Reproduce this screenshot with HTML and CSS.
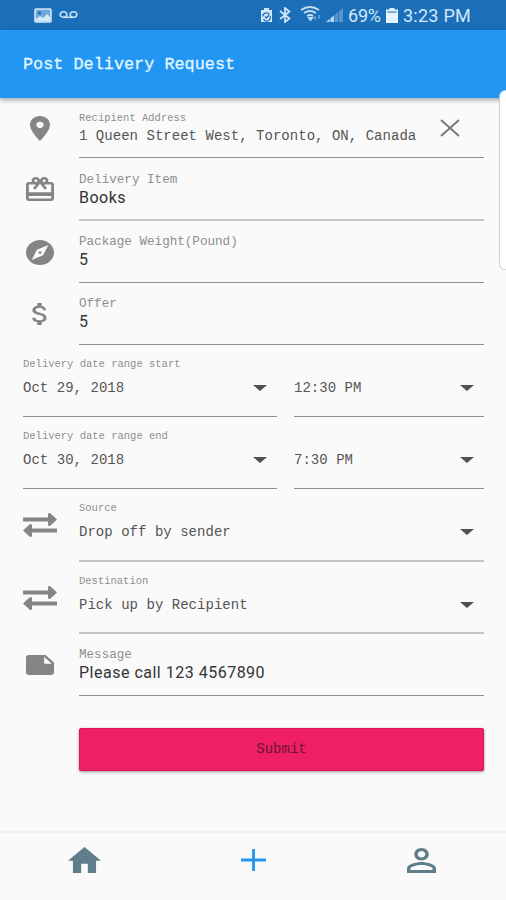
FILE: index.html
```html
<!DOCTYPE html>
<html lang="en">
<head>
  <meta charset="utf-8">
  <title>Post Delivery Request</title>
  <link rel="stylesheet" href="styles.css">
</head>
<body>
  <div class="status-bar">
    <div class="status-left">
      <svg width="18" height="15" viewBox="0 0 18 15"><rect x="1" y="1" width="16" height="13" rx="1" fill="#6fa9d8" stroke="#d3e8f8" stroke-width="1.6"/><circle cx="5.5" cy="5" r="1.7" fill="#1b6fb9"/><path d="M2 13V11L6 8L9 10L13 6L16 9V13Z" fill="#d3e8f8"/></svg>
      <svg class="voicemail" width="19" height="9" viewBox="0 0 19 9" fill="none" stroke="#c3ddf2" stroke-width="1.6"><ellipse cx="4.5" cy="4.5" rx="3.3" ry="2.8"/><ellipse cx="14.5" cy="4.5" rx="3.3" ry="2.8"/><path d="M4.5 7.3H14.5"/></svg>
    </div>
    <div class="status-right">
      <svg class="alarm" width="13" height="15" viewBox="0 0 13 15"><path d="M4 0H9V2H12V14H1V2H4Z" fill="#d3e8f8"/><path d="M3 8.500A3.500 3 0 0 1 9.500 6.500M10 8A3.500 3.500 0 0 1 3.500 11M5 8.500L6.500 10L9 7" fill="none" stroke="#1b6fb9" stroke-width="1.3"/></svg>
      <svg class="bluetooth" width="12" height="16" viewBox="0 0 12 16" fill="none" stroke="#d3e8f8" stroke-width="1.7"><path d="M1 4L10.500 11.500L6 15V1L10.500 4.500L1 12"/></svg>
      <svg class="wifi" width="22" height="16" viewBox="0 0 22 16" fill="none" stroke="#c3ddf2" stroke-width="1.9"><path d="M1 4Q10 -2 19 4M4 7Q10 3 16 7M7 10Q10 8 13 10"/><path d="M9 12H12L10.500 14Z" fill="#c3ddf2"/><path d="M15 10V14M19 9V13" stroke="#5c9bd0" stroke-width="2"/></svg>
      <svg class="signal" width="17" height="14" viewBox="0 0 17 14"><path d="M0 14L17 0V14Z" fill="#5796cd"/><path d="M0 14L8 7.400V14Z" fill="#b5d6f0"/><path d="M4 9V14M8.500 5V14M12.500 2V14" stroke="#1b6fb9" stroke-width=".7"/></svg>
      <span class="percent">69%</span>
      <svg class="battery" width="12" height="15" viewBox="0 0 12 15"><path d="M3.500 0H8.500V1.500H12V15H0V1.500H3.500Z" fill="#e3f2fd"/><path d="M1.500 4H10.500" stroke="#5b97cb" stroke-width="1.500"/></svg>
      <span class="clock">3:23 PM</span>
    </div>
  </div>

  <header class="app-bar">Post Delivery Request</header>

  <form class="form">
    <div class="row row-address">
      <div class="icon"><svg width="20" height="25" viewBox="5 2 14 20" preserveAspectRatio="none"><path d="M12 2C8.130 2 5 5.130 5 9c0 5.250 7 13 7 13s7-7.750 7-13c0-3.870-3.130-7-7-7zm0 9.500a2.500 2.500 0 1 1 0-5 2.500 2.500 0 0 1 0 5z"/></svg></div>
      <div class="field">
        <div class="label label-small">Recipient Address</div>
        <div class="value">1 Queen Street West, Toronto, ON, Canada</div>
        <svg class="clear" width="20" height="18" viewBox="0 0 20 18"><path d="M1 1L19 17M19 1L1 17"/></svg>
      </div>
    </div>

    <div class="row row-item">
      <div class="icon"><svg width="28" height="24" viewBox="2 2 20 19" preserveAspectRatio="none"><path d="M20 6h-2.180c.11-.31.180-.65.180-1 0-1.660-1.340-3-3-3-1.050 0-1.960.54-2.500 1.350l-.5.670-.5-.68C10.960 2.540 10.050 2 9 2 7.340 2 6 3.340 6 5c0 .35.070.69.180 1H4c-1.110 0-1.990.89-1.990 2L2 19c0 1.110.89 2 2 2h16c1.110 0 2-.89 2-2V8c0-1.110-.89-2-2-2zm-5-2c.55 0 1 .45 1 1s-.45 1-1 1-1-.45-1-1 .45-1 1-1zM9 4c.55 0 1 .45 1 1s-.45 1-1 1-1-.45-1-1 .45-1 1-1zm11 15H4v-2h16v2zm0-5H4V8h5.080L7 10.830 8.620 12 11 8.760l1-1.360 1 1.360L15.380 12 17 10.830 14.920 8H20v6z"/></svg></div>
      <div class="field thick">
        <div class="label">Delivery Item</div>
        <div class="value sans">Books</div>
      </div>
    </div>

    <div class="row">
      <div class="icon"><svg width="28" height="25" viewBox="2 2 20 20" preserveAspectRatio="none"><path d="M12 10.900c-.61 0-1.100.49-1.100 1.100s.49 1.100 1.100 1.100c.61 0 1.100-.49 1.100-1.100s-.49-1.100-1.100-1.100zM12 2C6.480 2 2 6.480 2 12s4.480 10 10 10 10-4.480 10-10S17.520 2 12 2zm2.190 12.190L6 18l3.810-8.190L18 6l-3.810 8.190z"/></svg></div>
      <div class="field">
        <div class="label">Package Weight(Pound)</div>
        <div class="value sans">5</div>
      </div>
    </div>

    <div class="row">
      <div class="icon icon-dollar"><svg width="15" height="22" viewBox="6.250 3 10.500 18" preserveAspectRatio="none"><path d="M11.800 10.900c-2.270-.59-3-1.200-3-2.150 0-1.090 1.010-1.850 2.700-1.850 1.780 0 2.440.85 2.500 2.100h2.210c-.07-1.720-1.120-3.300-3.210-3.810V3h-3v2.160c-1.940.42-3.500 1.680-3.500 3.610 0 2.310 1.910 3.460 4.700 4.130 2.500.6 3 1.480 3 2.410 0 .69-.49 1.790-2.700 1.790-2.060 0-2.870-.92-2.980-2.100h-2.200c.12 2.190 1.760 3.420 3.680 3.830V21h3v-2.150c1.950-.37 3.500-1.500 3.500-3.550 0-2.840-2.430-3.810-4.700-4.400z"/></svg></div>
      <div class="field">
        <div class="label">Offer</div>
        <div class="value sans">5</div>
      </div>
    </div>

    <div class="row row-select">
      <div class="field field-date">
        <div class="label label-small">Delivery date range start</div>
        <div class="value select">Oct 29, 2018<i class="caret"></i></div>
      </div>
      <div class="field">
        <div class="label label-small"></div>
        <div class="value select">12:30 PM<i class="caret"></i></div>
      </div>
    </div>

    <div class="row row-select">
      <div class="field field-date">
        <div class="label label-small">Delivery date range end</div>
        <div class="value select">Oct 30, 2018<i class="caret"></i></div>
      </div>
      <div class="field">
        <div class="label label-small"></div>
        <div class="value select">7:30 PM<i class="caret"></i></div>
      </div>
    </div>

    <div class="row row-select row-source">
      <div class="icon"><svg width="34" height="24" viewBox="0 0 34 24"><path d="M0 4.500H25V0.500L27 0L34 6.500L27 13L25 12.500V8.500H0ZM34 15.500H9V11.500L7 11L0 17.500L7 24L9 23.500V19.500H34Z"/></svg></div>
      <div class="field thick">
        <div class="label label-small">Source</div>
        <div class="value select">Drop off by sender<i class="caret"></i></div>
      </div>
    </div>

    <div class="row row-select">
      <div class="icon"><svg width="34" height="24" viewBox="0 0 34 24"><path d="M0 4.500H25V0.500L27 0L34 6.500L27 13L25 12.500V8.500H0ZM34 15.500H9V11.500L7 11L0 17.500L7 24L9 23.500V19.500H34Z"/></svg></div>
      <div class="field thick">
        <div class="label label-small">Destination</div>
        <div class="value select">Pick up by Recipient<i class="caret"></i></div>
      </div>
    </div>

    <div class="row row-message">
      <div class="icon"><svg width="28" height="20" viewBox="2 4 20 16" preserveAspectRatio="none"><path d="M22 10l-6-6H4c-1.100 0-2 .9-2 2v12.010c0 1.100.9 1.990 2 1.990l16-.01c1.100 0 2-.89 2-1.990v-8zm-7-4.500l5.500 5.500H15V5.500z"/></svg></div>
      <div class="field">
        <div class="label">Message</div>
        <div class="value sans">Please call 123 4567890</div>
      </div>
    </div>

    <button type="button" class="submit">Submit</button>
  </form>

  <nav class="bottom-nav">
    <a><svg width="33" height="26" viewBox="2 3 20 17" preserveAspectRatio="none" fill="#607d8b"><path d="M10 20v-6h4v6h5v-8h3L12 3 2 12h3v8z"/></svg></a>
    <a><svg width="25" height="22" viewBox="0 0 25 22" fill="none" stroke="#2196f3" stroke-width="2.800"><path d="M0 11H25M12.500 0V22"/></svg></a>
    <a><svg width="29" height="25" viewBox="4 4 16 16" preserveAspectRatio="none" fill="#607d8b"><path d="M12 5.900c1.160 0 2.100.94 2.100 2.100s-.94 2.100-2.100 2.100S9.900 9.160 9.900 8s.94-2.100 2.100-2.100m0 9c2.970 0 6.100 1.460 6.100 2.100v1.100H5.900V17c0-.64 3.130-2.100 6.100-2.100M12 4C9.790 4 8 5.790 8 8s1.790 4 4 4 4-1.790 4-4-1.790-4-4-4zm0 9c-2.670 0-8 1.340-8 4v3h16v-3c0-2.660-5.330-4-8-4z"/></svg></a>
  </nav>

  <div class="edge-handle"></div>
</body>
</html>
```
FILE: styles.css
```css
* {
  box-sizing: border-box;
}

body {
  margin: 0;
  height: 900px;
  display: flex;
  flex-direction: column;
  position: relative;
  overflow: hidden;
  background: #fafafa;
  font-family: "Liberation Mono", monospace;
}

svg {
  display: block;
  flex: none;
}

.status-bar {
  height: 30px;
  flex: none;
  display: flex;
  justify-content: space-between;
  padding: 0 35px 0 34px;
  background: #1b6fb9;
  color: #d3e8f8;
  font: 18px/31px Roboto, sans-serif;
}

.status-left,
.status-right {
  display: flex;
  align-items: center;
}

.status-left {
  gap: 7px;
}

.voicemail {
  margin-bottom: 2px;
}

.bluetooth {
  margin-left: 6px;
}

.wifi {
  margin-left: 9px;
  margin-bottom: 2px;
}

.signal {
  margin-left: 4px;
}

.percent {
  width: 34px;
  margin-left: 5px;
  letter-spacing: -0.2px;
}

.battery {
  margin-left: 4px;
}

.clock {
  width: 68px;
  margin-left: 5px;
  white-space: nowrap;
  letter-spacing: 0.25px;
}

.app-bar {
  height: 68px;
  flex: none;
  padding-left: 23px;
  background: #2196f3;
  color: #e3f7ff;
  font-size: 16.8px;
  line-height: 69px;
  letter-spacing: 0.03px;
  -webkit-text-stroke: 0.3px;
  box-shadow: 0 2px 5px rgba(0, 0, 0, 0.35);
}

.form {
  flex: 1;
  display: flex;
  flex-direction: column;
  padding: 0 22px 0 23px;
}

.row {
  display: flex;
  height: 62px;
}

.row-address {
  height: 60px;
}

.row-item {
  height: 63px;
}

.row-select {
  height: 72px;
  gap: 17px;
}

.row-source {
  height: 73px;
}

.icon {
  width: 34px;
  margin-right: 22px;
  flex: none;
  display: flex;
  justify-content: center;
  align-items: center;
  fill: #858585;
}

.row-item .icon,
.row-select .icon {
  padding-bottom: 1px;
}

.row-select .icon {
  margin-right: 5px;
}

.icon-dollar {
  padding-right: 2px;
}

.field {
  flex: 1;
  position: relative;
  padding-top: 14px;
  border-bottom: 1px solid #8f8f8f;
}

.thick {
  border-bottom: 2px solid #c4c4c4;
}

.row-select .field {
  padding-top: 12px;
}

.row-address .field {
  padding-top: 13px;
}

.row-item .field {
  padding-top: 15px;
}

.field-date {
  flex: 0 0 254px;
}

.label {
  height: 14px;
  color: #8e8e8e;
  font-size: 12.6px;
  line-height: 14px;
}

.label-small {
  font-size: 10.5px;
}

.row-address .label {
  margin-bottom: 1px;
}

.row-select .label {
  margin-bottom: 7px;
}

.value {
  color: #555;
  font-size: 14px;
  line-height: 20px;
  letter-spacing: 0.03px;
  white-space: nowrap;
}

.sans {
  color: #333;
  font-family: Roboto, sans-serif;
  font-size: 16px;
  line-height: 21px;
  letter-spacing: 0.5px;
}

.select {
  display: flex;
  justify-content: space-between;
  align-items: center;
  padding-right: 10px;
}

.caret {
  border: 7px solid transparent;
  border-top: 6px solid #505050;
  border-bottom: 0;
}

.clear {
  position: absolute;
  top: 21px;
  right: 24px;
  fill: none;
  stroke: #757575;
  stroke-width: 1.8;
}

.submit {
  height: 43px;
  margin: 32px 0 0 56px;
  padding: 0 0 2px;
  border: 1px solid #dc1659;
  border-radius: 2px;
  background: #ee2063;
  box-shadow: 0 1px 3px rgba(0, 0, 0, 0.4);
  color: #6b1433;
  font: 14px "Liberation Mono", monospace;
}

.bottom-nav {
  height: 69px;
  flex: none;
  display: flex;
  border-top: 2px solid #f1f1f1;
  padding-bottom: 13px;
}

.bottom-nav a {
  flex: 1;
  display: flex;
  justify-content: center;
  align-items: center;
}

/* side panel handle on the right screen edge */
.edge-handle {
  position: absolute;
  top: 90px;
  right: -6px;
  width: 13px;
  height: 180px;
  border: 1px solid #d0d0d0;
  border-radius: 7px;
  background: #fff;
}
```
